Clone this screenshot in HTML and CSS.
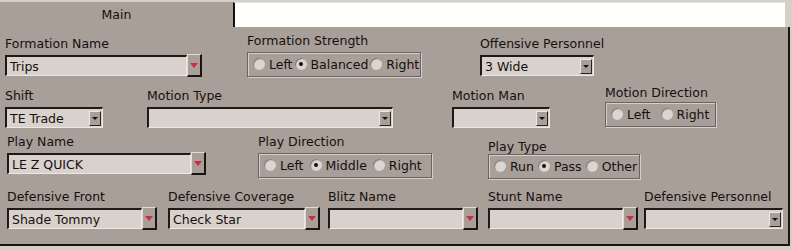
FILE: index.html
```html
<!DOCTYPE html>
<html lang="en">
<head>
    <meta charset="UTF-8">
    <title>Play Editor</title>
    <link rel="stylesheet" href="styles.css">
</head>
<body>
    <div class="window">
        <div class="tabstrip">
            <div class="tab">Main</div>
            <div class="tab-space"></div>
        </div>

        <div class="panel">
            <!-- offense -->
            <div class="row row-1">
                <div class="field f-formation">
                    <label>Formation Name</label>
                    <div class="combo">
                        <div class="combo-text">Trips</div>
                        <div class="drop-btn"><span class="red-arrow"></span></div>
                    </div>
                </div>
                <div class="field f-strength">
                    <label>Formation Strength</label>
                    <div class="group g-strength">
                        <div class="opt"><span class="radio"></span>Left</div>
                        <div class="opt"><span class="radio on"></span>Balanced</div>
                        <div class="opt"><span class="radio"></span>Right</div>
                    </div>
                </div>
                <div class="field f-off-pers">
                    <label>Offensive Personnel</label>
                    <div class="combo">
                        <div class="combo-text">3 Wide<span class="arrow-btn"><span class="black-arrow"></span></span></div>
                    </div>
                </div>
            </div>

            <!-- motion -->
            <div class="row row-2">
                <div class="field f-shift">
                    <label>Shift</label>
                    <div class="combo">
                        <div class="combo-text">TE Trade<span class="arrow-btn"><span class="black-arrow"></span></span></div>
                    </div>
                </div>
                <div class="field f-motion-type">
                    <label>Motion Type</label>
                    <div class="combo">
                        <div class="combo-text"><span></span><span class="arrow-btn"><span class="black-arrow"></span></span></div>
                    </div>
                </div>
                <div class="field f-motion-man">
                    <label>Motion Man</label>
                    <div class="combo">
                        <div class="combo-text"><span></span><span class="arrow-btn"><span class="black-arrow"></span></span></div>
                    </div>
                </div>
                <div class="field f-motion-dir">
                    <label>Motion Direction</label>
                    <div class="group g-motion">
                        <div class="opt"><span class="radio"></span>Left</div>
                        <div class="opt"><span class="radio"></span>Right</div>
                    </div>
                </div>
            </div>

            <!-- play -->
            <div class="row row-3">
                <div class="field f-play-name">
                    <label>Play Name</label>
                    <div class="combo">
                        <div class="combo-text">LE Z QUICK</div>
                        <div class="drop-btn"><span class="red-arrow"></span></div>
                    </div>
                </div>
                <div class="field f-play-dir">
                    <label>Play Direction</label>
                    <div class="group g-dir">
                        <div class="opt"><span class="radio"></span>Left</div>
                        <div class="opt"><span class="radio on"></span>Middle</div>
                        <div class="opt"><span class="radio"></span>Right</div>
                    </div>
                </div>
                <div class="field f-play-type">
                    <label>Play Type</label>
                    <div class="group g-type">
                        <div class="opt"><span class="radio"></span>Run</div>
                        <div class="opt"><span class="radio on"></span>Pass</div>
                        <div class="opt"><span class="radio"></span>Other</div>
                    </div>
                </div>
            </div>

            <!-- defense -->
            <div class="row row-4">
                <div class="field f-def-front">
                    <label>Defensive Front</label>
                    <div class="combo">
                        <div class="combo-text">Shade Tommy</div>
                        <div class="drop-btn"><span class="red-arrow"></span></div>
                    </div>
                </div>
                <div class="field f-def-cov">
                    <label>Defensive Coverage</label>
                    <div class="combo">
                        <div class="combo-text">Check Star</div>
                        <div class="drop-btn"><span class="red-arrow"></span></div>
                    </div>
                </div>
                <div class="field f-blitz">
                    <label>Blitz Name</label>
                    <div class="combo">
                        <div class="combo-text"></div>
                        <div class="drop-btn"><span class="red-arrow"></span></div>
                    </div>
                </div>
                <div class="field f-stunt">
                    <label>Stunt Name</label>
                    <div class="combo">
                        <div class="combo-text"></div>
                        <div class="drop-btn"><span class="red-arrow"></span></div>
                    </div>
                </div>
                <div class="field f-def-pers">
                    <label>Defensive Personnel</label>
                    <div class="combo">
                        <div class="combo-text"><span></span><span class="arrow-btn"><span class="black-arrow"></span></span></div>
                    </div>
                </div>
            </div>
        </div>
    </div>
</body>
</html>
```

FILE: styles.css
```css
* {
    box-sizing: border-box;
    margin: 0;
    padding: 0;
}

body {
    background-color: #d4d0c8;
    font-family: "DejaVu Sans", Verdana, sans-serif;
    font-size: 12.5px;
    color: #141010;
}

.window {
    width: 792px;
    height: 250px;
    padding-top: 2px;
}

/* tabs */
.tabstrip {
    display: flex;
    height: 25px;
}

.tab {
    width: 233px;
    background-color: #a99f99;
    text-align: center;
    line-height: 25px;
}

.tab-space {
    width: 552px;
    background-color: #fffffb;
    border-left: 2px solid #111;
    border-top: 1px solid #e6e2dc;
}

/* main panel */
.panel {
    width: 790px;
    height: 219px;
    background-color: #a99f99;
    border-right: 2px solid #1a1512;
    border-bottom: 2px solid #1a1512;
    padding-top: 7px;
}

.row {
    display: flex;
    align-items: flex-start;
}

.row-1 { height: 52px; }
.row-2 { height: 48px; }
.row-3 { height: 55px; }
.row-4 { height: 55px; }

.field {
    display: flex;
    flex-direction: column;
}

.field label {
    height: 14px;
    line-height: 14px;
    margin-bottom: 4px;
    white-space: nowrap;
}

/* field positions */
.f-formation  { margin: 3px 0 0 5px;  width: 197px; }
.f-strength   { margin: 0 0 0 45px;   width: 174px; }
.f-off-pers   { margin: 3px 0 0 59px; width: 114px; }

.f-shift       { margin: 3px 0 0 5px;  width: 98px; }
.f-motion-type { margin: 3px 0 0 44px; width: 246px; }
.f-motion-man  { margin: 3px 0 0 59px; width: 98px; }
.f-motion-dir  { margin: 0 0 0 55px;   width: 111px; }
.f-motion-dir label { margin-bottom: 2px; }

.f-play-name { margin: 1px 0 0 7px;  width: 199px; }
.f-play-dir  { margin: 1px 0 0 52px; width: 174px; }
.f-play-type { margin: 6px 0 0 56px; width: 152px; }
.f-play-type label { margin-bottom: 0; }

.f-def-front { margin: 1px 0 0 7px;  width: 150px; }
.f-def-cov   { margin: 1px 0 0 11px; width: 152px; }
.f-blitz     { margin: 1px 0 0 8px;  width: 150px; }
.f-stunt     { margin: 1px 0 0 10px; width: 150px; }
.f-def-pers  { margin: 1px 0 0 6px;  width: 139px; }

/* combo boxes */
.combo {
    display: flex;
    align-items: center;
    height: 21px;
}

.combo-text {
    flex: 1;
    height: 21px;
    display: flex;
    align-items: center;
    justify-content: space-between;
    background-color: #d8d1cc;
    border-style: solid;
    border-width: 2px 1px 1px 2px;
    border-color: #1e1a18 #ece8e4 #ece8e4 #1e1a18;
    padding: 0 1px 0 3px;
    white-space: nowrap;
}

.drop-btn {
    width: 15px;
    height: 23px;
    display: flex;
    align-items: center;
    justify-content: center;
    background-color: #a99f99;
    border-style: solid;
    border-width: 1px 2px 2px 1px;
    border-color: #e2dcd8 #1a1512 #1a1512 #e2dcd8;
}

.red-arrow {
    width: 0;
    height: 0;
    border-left: 4px solid transparent;
    border-right: 4px solid transparent;
    border-top: 5px solid #d22a3e;
}

.arrow-btn {
    width: 12px;
    height: 15px;
    display: flex;
    align-items: center;
    justify-content: center;
    background-color: #a99f99;
    border-style: solid;
    border-width: 1px;
    border-color: #ece8e4 #2a2420 #2a2420 #ece8e4;
}

.black-arrow {
    width: 0;
    height: 0;
    border-left: 3px solid transparent;
    border-right: 3px solid transparent;
    border-top: 3px solid #111;
}

/* radio groups */
.group {
    height: 25px;
    display: flex;
    align-items: center;
    border: 1px solid #6c635e;
    box-shadow: inset 1px 1px 0 #d6d0cc, 1px 1px 0 #d6d0cc;
    padding: 0 0 1px 5px;
    white-space: nowrap;
}

.g-strength { gap: 2px; }
.g-motion   { gap: 10px; }
.g-dir      { gap: 6px; }
.g-type     { gap: 4px; }

.opt {
    display: flex;
    align-items: center;
}

.radio {
    position: relative;
    width: 12px;
    height: 12px;
    margin-right: 4px;
    border-radius: 50%;
    background-color: #dcd6d2;
    box-shadow: inset 1px 1px 1px #7a716c;
}

.radio.on::after {
    content: "";
    position: absolute;
    left: 4px;
    top: 4px;
    width: 4px;
    height: 4px;
    border-radius: 50%;
    background-color: #111;
}
```
